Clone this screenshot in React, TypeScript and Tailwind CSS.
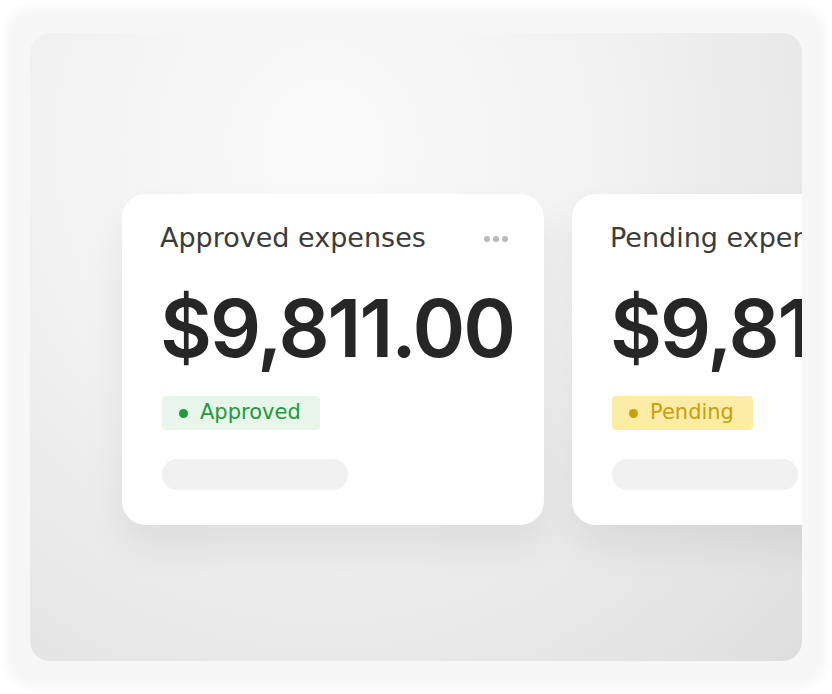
const FONT = "font-['DejaVu_Sans',sans-serif]"

type Status = 'approved' | 'pending'

const BADGE = {
  approved: { box: 'bg-[#e7f5ea] text-[#1d9a3c]', dot: 'bg-[#1d9a3c]', label: 'Approved' },
  pending: { box: 'bg-[#fdeca6] text-[#c9a00a]', dot: 'bg-[#c9a00a]', label: 'Pending' },
}

function ExpenseCard({ title, amount, status }: { title: string; amount: string; status: Status }) {
  const b = BADGE[status]
  return (
    <div className="w-[422px] h-[331px] shrink-0 bg-white rounded-[24px] shadow-[0_22px_40px_rgba(0,0,0,0.07)] pl-[38px] pr-[36px] pt-[27px]">
      <div className="flex items-center justify-between">
        <span className="text-[27px] leading-[34px] text-[#3b3b3b] whitespace-nowrap">{title}</span>
        <div className="flex gap-[3px] pt-[2px]">
          <span className="w-[6px] h-[6px] rounded-full bg-[#b8b8b8]" />
          <span className="w-[6px] h-[6px] rounded-full bg-[#b8b8b8]" />
          <span className="w-[6px] h-[6px] rounded-full bg-[#b8b8b8]" />
        </div>
      </div>
      <div className="mt-[28px] font-['Inter',sans-serif] text-[80px] leading-[90px] font-semibold text-[#262626] tracking-[-2px] whitespace-nowrap">
        {amount}
      </div>
      <div className={`mt-[23px] ml-[2px] inline-flex items-center h-[34px] px-[17px] rounded-[4px] ${b.box}`}>
        <span className={`w-[9px] h-[9px] rounded-full ${b.dot}`} />
        <span className="ml-[12px] text-[21px] pr-[2px]">{b.label}</span>
      </div>
      <div className="mt-[29px] ml-[2px] w-[186px] h-[31px] rounded-full bg-[#f0f0f0]" />
    </div>
  )
}

export default function App() {
  return (
    <div className={`w-[832px] h-[694px] bg-white p-[2px] ${FONT}`}>
      <div className="w-full h-full rounded-[32px] bg-[#f7f7f7] shadow-[inset_0_0_10px_4px_#ffffff] pt-[31px] pl-[28px] pr-[28px] pb-[31px]">
        <div className="w-full h-full rounded-[20px] overflow-hidden bg-[radial-gradient(ellipse_at_38%_18%,#fbfbfb_0%,#f1f1f1_45%,#e4e4e4_85%,#dedede_100%)] pt-[161px] pl-[92px]">
          <div className="flex gap-[28px]">
            <ExpenseCard title="Approved expenses" amount="$9,811.00" status="approved" />
            <ExpenseCard title="Pending expenses" amount="$9,811.00" status="pending" />
          </div>
        </div>
      </div>
    </div>
  )
}
